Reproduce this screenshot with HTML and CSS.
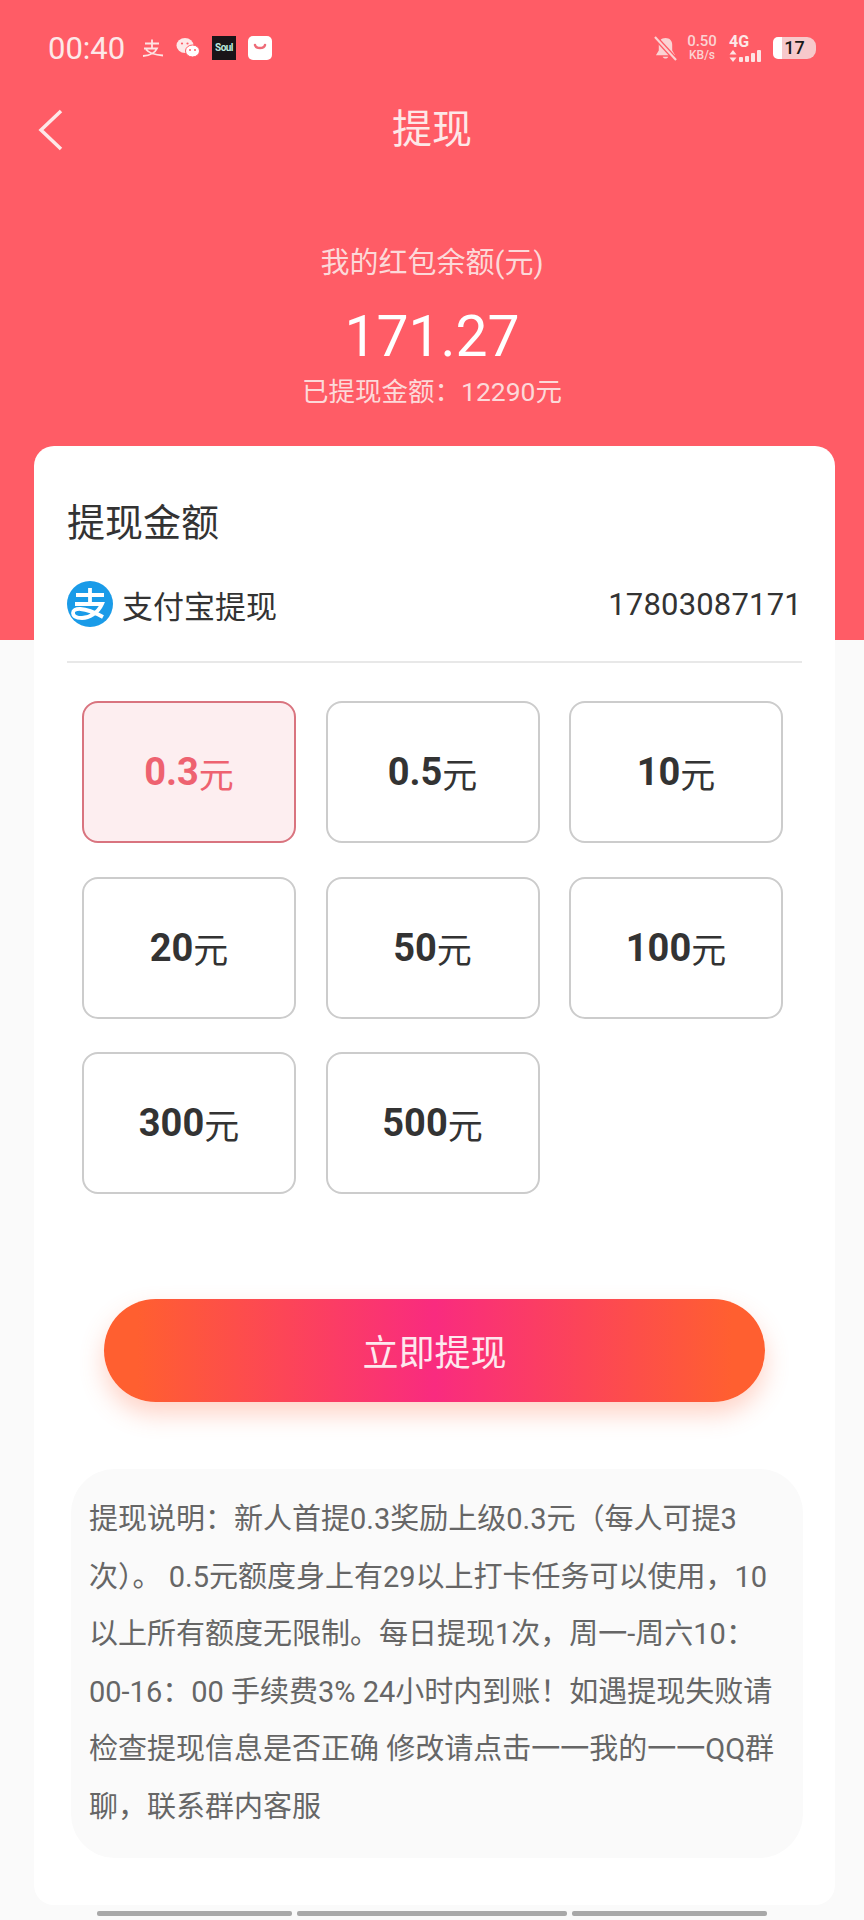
FILE: index.html
```html
<!DOCTYPE html>
<html lang="zh-CN">
	<head>
		<meta charset="utf-8">
		<title>提现</title>
		<link rel="stylesheet" href="styles.css">
	</head>
	<body>
		<div class="hero">
			<div class="status">
				<span class="time">00:40</span>
				<svg class="app-alipay" viewBox="0 0 24 20" width="24" height="20"><path d="M5 5.500h14M12 1.500v8M4 10.500h13c-2 4.500-7 7-14 7.500M6 11.500c3 3.500 9 5.500 17 6" fill="none" stroke="#fde3e3" stroke-width="1.800"/></svg>
				<svg class="app-wechat" viewBox="0 0 24 22" width="24" height="22">
					<ellipse cx="9" cy="8.500" rx="8.500" ry="7.500" fill="#fde8e8"/>
					<ellipse cx="16.500" cy="14" rx="7" ry="6" fill="#fff" stroke="#ff5c66"/>
					<circle cx="6" cy="6.500" r="1.100" fill="#ff5c66"/>
					<circle cx="11.500" cy="6.500" r="1.100" fill="#ff5c66"/>
					<circle cx="14" cy="13" r="1" fill="#ff5c66"/>
					<circle cx="19" cy="13" r="1" fill="#ff5c66"/>
				</svg>
				<span class="app-soul">Soul</span>
				<svg class="app-bag" viewBox="0 0 24 24" width="24" height="24">
					<rect width="24" height="24" rx="5" fill="#fff"/>
					<path d="M7 9c1 4 9 4 10 0" fill="none" stroke="#ee6b78" stroke-width="2.500" stroke-linecap="round"/>
				</svg>
				<div class="status-right">
					<svg viewBox="0 0 24 26" width="23" height="25">
						<path d="M12 2c-4.500 0-7 3-7 7v6l-3 5h20l-3-5V9c0-4-2.500-7-7-7z" fill="#fbd3d3"/>
						<path d="M9 21.500c1 2.500 5 2.500 6 0z" fill="#fbd3d3"/>
						<path d="M1 1l22 24" stroke="#ff5c66" stroke-width="5"/>
						<path d="M1 1l22 24" stroke="#fbd3d3" stroke-width="2.200"/>
					</svg>
					<div class="speed"><span>0.50</span><span class="speed-unit">KB/s</span></div>
					<div class="signal">
						<span class="signal-type">4G</span>
						<div class="bars">
							<svg viewBox="0 0 8 12" width="8" height="12"><path d="M4 0l3.500 4.500h-7zM4 12l3.500-4.500h-7z" fill="#fde3e3"/></svg>
							<i class="bar-1"></i><i class="bar-2"></i><i class="bar-3"></i><i class="bar-4"></i>
						</div>
					</div>
					<div class="battery"><span>17</span></div>
				</div>
			</div>

			<div class="navbar">
				<svg class="back" viewBox="0 0 26 42" width="26" height="42"><path d="M23 2L3 21l20 19" fill="none" stroke="#fde8e8" stroke-width="3.500"/></svg>
				<h1>提现</h1>
			</div>

			<div class="balance">
				<div class="balance-label">我的红包余额(元)</div>
				<div class="balance-num">171.27</div>
				<div class="balance-sub">已提现金额：12290元</div>
			</div>
		</div>

		<div class="card">
			<div class="card-title">提现金额</div>
			<div class="pay-row">
				<svg class="pay-logo" viewBox="0 0 46 46" width="46" height="46">
					<defs><clipPath id="logo-clip"><circle cx="23" cy="23" r="23"/></clipPath></defs>
					<circle cx="23" cy="23" r="23" fill="#1a9be8"/>
					<path d="M9 14h28M23 7v15M8 23h27c-4 9-13 14-20 14-6 0-9-2-9-5 0-5 10-7 30 4" fill="none" stroke="#fff" stroke-width="3.800" clip-path="url(#logo-clip)"/>
				</svg>
				<span class="pay-name">支付宝提现</span>
				<span class="pay-account">17803087171</span>
			</div>

			<ul class="amounts">
				<li class="amount active"><b>0.3</b>元</li>
				<li class="amount"><b>0.5</b>元</li>
				<li class="amount"><b>10</b>元</li>
				<li class="amount"><b>20</b>元</li>
				<li class="amount"><b>50</b>元</li>
				<li class="amount"><b>100</b>元</li>
				<li class="amount"><b>300</b>元</li>
				<li class="amount"><b>500</b>元</li>
			</ul>

			<div class="submit">立即提现</div>

			<p class="notes">提现说明：新人首提0.3奖励上级0.3元（每人可提3<br>次）。 0.5元额度身上有29以上打卡任务可以使用，10<br>以上所有额度无限制。每日提现1次，周一-周六10：<br>00-16：00 手续费3% 24小时内到账！如遇提现失败请<br>检查提现信息是否正确 修改请点击一一我的一一QQ群<br>聊，联系群内客服</p>
		</div>

		<div class="tabs">
			<i class="tab-side"></i>
			<i class="tab-mid"></i>
			<i class="tab-side"></i>
		</div>
	</body>
</html>
```

FILE: styles.css
```css
* { box-sizing: border-box; }

html, body {
	height: 1920px;
	overflow: hidden;
}

body {
	margin: 0;
	background: #fafafa;
	font-family: Roboto, "Noto Sans CJK SC", sans-serif;
	color: #333;
}

/*************************************
Red header
**************************************/

.hero {
	height: 640px;
	padding-top: 28px;
	background: #ff5c66;
	color: #fde8e8;
}

.status {
	display: flex;
	align-items: center;
	height: 40px;
	padding: 0 48px;
}

.time {
	width: 92px;
	font-size: 31px;
}

.app-wechat { margin-left: 12px; }

.app-soul {
	display: block;
	width: 24px;
	height: 24px;
	margin-left: 12px;
	background: #1a1418;
	color: #bfe9df;
	font-size: 10px;
	font-weight: 700;
	letter-spacing: -0.5px;
	line-height: 24px;
	text-align: center;
}

.app-bag { margin-left: 12px; }

.status-right {
	display: flex;
	align-items: center;
	margin-left: auto;
}

.speed {
	display: flex;
	flex-direction: column;
	align-items: center;
	width: 32px;
	margin-left: 9px;
	font-size: 15px;
	font-weight: 500;
	line-height: 14px;
	color: #fbd3d3;
}

.speed-unit { font-size: 12px; }

.signal {
	margin-left: 11px;
	font-size: 16px;
	font-weight: 700;
	line-height: 14px;
}

.signal-type { display: block; }

.bars {
	display: flex;
	align-items: flex-end;
	gap: 2px;
	height: 13px;
}

.bars i {
	width: 4px;
	background: #fde3e3;
	border-radius: 1px;
}

.bar-1 { height: 5px; }
.bar-2 { height: 6px; }
.bar-3 { height: 9px; }
.bar-4 { height: 12px; }

.battery {
	width: 43px;
	height: 22px;
	margin-left: 12px;
	border-radius: 5px 9px 9px 5px;
	background: linear-gradient(to right, #fff 0, #fff 22%, #f7c9cb 22%);
	color: #1a1a1a;
	font-size: 18px;
	font-weight: 500;
	line-height: 22px;
	text-align: center;
}

.navbar {
	display: grid;
	grid-template-columns: 1fr auto 1fr;
	align-items: center;
	height: 80px;
	margin-top: 21px;
	padding: 0 38px;
}

.navbar h1 {
	margin: 0;
	font-size: 40px;
	font-weight: 400;
	line-height: 82px;
}

.balance {
	margin-top: 74px;
	text-align: center;
}

.balance-label {
	font-size: 29px;
	line-height: 40px;
	color: #fcd9d9;
}

.balance-num {
	margin-top: 19px;
	font-size: 57px;
	line-height: 70px;
	color: #fff;
}

.balance-sub {
	margin-top: 2px;
	font-size: 26.500px;
	line-height: 36px;
	color: #fcd9d9;
}

/*************************************
White card
**************************************/

.card {
	margin: -194px 29px 0 34px;
	padding: 52px 33px 47px;
	position: relative;
	background: #fff;
	border-radius: 20px;
}

.card-title {
	font-size: 38px;
	line-height: 50px;
}

.pay-row {
	display: flex;
	align-items: center;
	margin-top: 33px;
	padding-bottom: 34px;
	border-bottom: 2px solid #e8e8e8;
}

.pay-name {
	margin-left: 9px;
	font-size: 31px;
}

.pay-account {
	margin-left: auto;
	font-size: 31px;
	letter-spacing: 0.2px;
}

.amounts {
	display: grid;
	grid-template-columns: repeat(3, 214px);
	grid-auto-rows: 142px;
	column-gap: 29.500px;
	row-gap: 33.500px;
	margin: 38px 0 0;
	padding: 0 0 0 15px;
	list-style: none;
}

.amount {
	display: flex;
	align-items: center;
	justify-content: center;
	border: 2px solid #cccccc;
	border-radius: 16px;
	font-size: 35px;
}

.amount b {
	font-size: 38px;
	font-weight: 700;
}

.amount.active {
	border-color: #d9747f;
	background: #fdeef0;
	color: #ee6270;
}

.submit {
	height: 103px;
	margin: 105px 37px 0;
	border-radius: 52px;
	background: linear-gradient(to right, #ff5f30 5%, #f92b7f 50%, #ff5f30 95%);
	box-shadow: 0 12px 24px rgba(255, 110, 70, 0.3);
	color: #fde8ee;
	font-size: 36px;
	line-height: 110px;
	text-align: center;
}

.notes {
	margin: 67px -1px 0 4px;
	padding: 22px 0 22px 18px;
	background: #fafafa;
	border-radius: 44px;
	color: #666;
	font-size: 29px;
	line-height: 57.500px;
	white-space: nowrap;
}

/*************************************
Bottom tab bars
**************************************/

.tabs {
	display: flex;
	gap: 5px;
	margin: 6px 0 0 97px;
}

.tabs i {
	height: 5px;
	background: #a8a8a8;
	border-radius: 2px;
}

.tab-side { width: 195px; }
.tab-mid { width: 270px; }
```
